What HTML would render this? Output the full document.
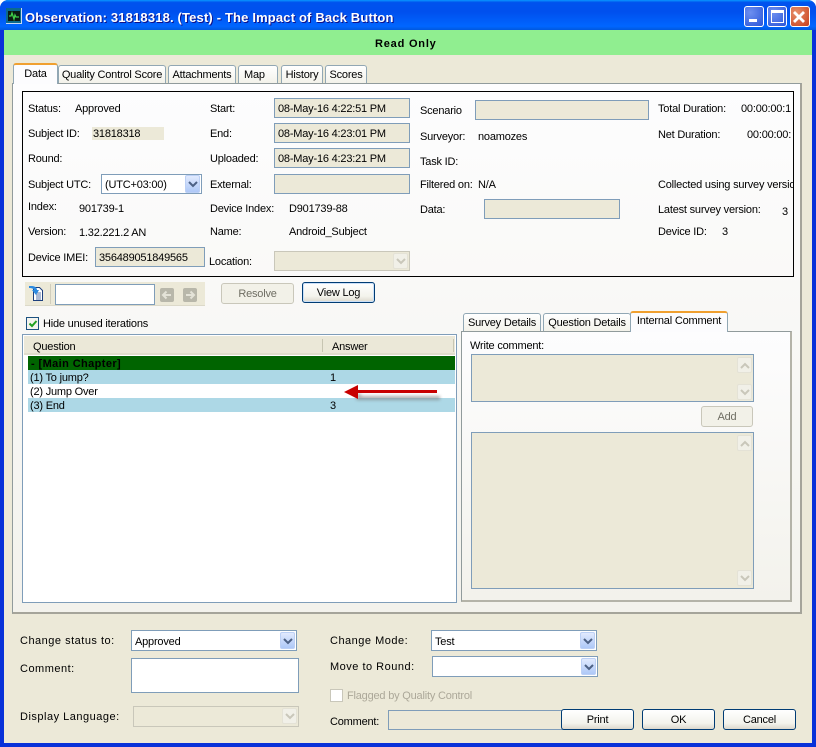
<!DOCTYPE html>
<html><head><meta charset="utf-8"><style>
html,body{margin:0;padding:0;background:#fff}
#w{position:relative;width:816px;height:747px;overflow:hidden;font:11px/14px "Liberation Sans",sans-serif;letter-spacing:-.2px;color:#000;background:#0831d9;border-radius:8px 8px 0 0}
#w div,#w span.t{position:absolute;box-sizing:border-box;white-space:nowrap}
.t{position:absolute;white-space:nowrap;margin-top:1px}
.f{background:#ece9d8;border:1px solid #7f9db9;padding:3px 3px;line-height:14px}
.w{background:#fff;border:1px solid #7f9db9;padding:4px 3px;line-height:14px}
.dis{background:#ece9d8;border:1px solid #c9c7ba}
.btn{border:1px solid #003c74;border-radius:3px;background:linear-gradient(#fff,#f3f3ec 70%,#dcd8cc);text-align:center;line-height:21px}
.btnd{border:1px solid #c9c7ba;border-radius:3px;background:#f2f1e8;color:#6f6e63;text-align:center;line-height:21px}
.cb{width:15px;border-radius:2px;background:linear-gradient(#e1eafe,#aec8f7);border:1px solid #bcd0f5}
.cbd{width:15px;height:16px;border-radius:2px;background:#f1f0e8;border:1px solid #e4e2d6}
.tab{background:linear-gradient(#fff,#f3f2ea);border:1px solid #91a7b4;border-bottom:0;border-radius:3px 3px 0 0;text-align:center;line-height:19px;height:18px}
.atab{background:#fcfcfe;border:1px solid #91a7b4;border-bottom:0;border-top:2px solid #f0a030;border-radius:3px 3px 0 0;text-align:center;line-height:17px}
.l{letter-spacing:.5px}
svg{position:absolute;display:block}
</style></head><body><div id="w">

<div style="left:0;top:0;width:816px;height:30px;border-radius:8px 8px 0 0;background:linear-gradient(#0997ff 0,#0053ee 8%,#0050ee 40%,#0066ff 88%,#0058dd 100%)"></div>
<svg style="left:6px;top:8px" width="16" height="16"><rect width="16" height="16" fill="#0c6a8c"/><rect x="15" width="1" height="16" fill="#c8d8f0"/><rect y="15" width="16" height="1" fill="#c8d8f0"/><rect x="2" y="3" width="12" height="10" fill="#0b1a12"/><path d="M3 8h2l1-3 2 6 1-4 1 2h3" stroke="#3fd04a" stroke-width="1.300" fill="none"/></svg>
<span class="t" style="left:25px;top:8px;font:bold 13px/17px 'Liberation Sans',sans-serif;color:#fff;letter-spacing:.16px;text-shadow:1px 1px 0 #0f1089">Observation: 31818318. (Test) - The Impact of Back Button</span>

<div style="left:744px;top:6px;width:20px;height:21px;border:1px solid #fff;border-radius:3px;background:radial-gradient(circle at 30% 30%,#6d8ff0,#2a55d8)"><div style="left:4px;top:12px;width:8px;height:3px;background:#fff"></div></div>
<div style="left:767px;top:6px;width:20px;height:21px;border:1px solid #fff;border-radius:3px;background:radial-gradient(circle at 30% 30%,#6d8ff0,#2a55d8)"><div style="left:3px;top:3px;width:13px;height:13px;border:1px solid #fff;border-top:3px solid #fff"></div></div>
<div style="left:790px;top:6px;width:20px;height:21px;border:1px solid #fff;border-radius:3px;background:radial-gradient(circle at 30% 30%,#e8906c,#c8401c)"><svg style="left:2px;top:3px" width="13" height="14"><path d="M1 2l10 10M11 2L1 12" stroke="#fff" stroke-width="2.800"/></svg></div>

<div style="left:4px;top:30px;width:808px;height:713px;background:#ece9d8"></div>
<div style="left:4px;top:30px;width:808px;height:25px;background:#90ee90"></div>
<span class="t" style="left:375px;top:36px;font-weight:bold;letter-spacing:.8px">Read Only</span>

<div style="left:12px;top:83px;width:790px;height:531px;border:1px solid #919b9c;border-right:2px solid #a5a49a;border-bottom:2px solid #a5a49a;background:linear-gradient(#fdfdfe,#f3f2ec)"></div>
<div class="atab" style="left:13px;top:63px;width:45px;height:21px;line-height:18px">Data</div>
<div class="tab" style="left:58px;top:65px;width:108px">Quality Control Score</div>
<div class="tab" style="left:168px;top:65px;width:68px">Attachments</div>
<div class="tab" style="left:238px;top:65px;width:40px;text-align:left;padding-left:5px">Map</div>
<div class="tab" style="left:281px;top:65px;width:42px">History</div>
<div class="tab" style="left:325px;top:65px;width:42px">Scores</div>

<div style="left:22px;top:91px;width:772px;height:186px;border:1px solid #000"></div>

<span class="t" style="left:28px;top:101px">Status:</span><span class="t" style="left:75px;top:101px">Approved</span>
<span class="t" style="left:28px;top:126px">Subject ID:</span>
<div style="left:92px;top:127px;width:72px;height:13px;background:#ece9d8"></div><span class="t" style="left:93px;top:126px">31818318</span>
<span class="t" style="left:28px;top:151px">Round:</span>
<span class="t" style="left:28px;top:177px">Subject UTC:</span>
<div class="w" style="left:101px;top:174px;width:101px;height:20px;padding:3px 3px">(UTC+03:00)</div>
<div class="cb" style="left:185px;top:175px;height:18px"></div><svg style="left:188px;top:181px" width="10" height="7"><path d="M1 1l4 4 4-4" stroke="#4d6185" stroke-width="2" fill="none"/></svg>
<span class="t" style="left:28px;top:199px">Index:</span><span class="t" style="left:79px;top:201px">901739-1</span>
<span class="t" style="left:28px;top:224px">Version:</span><span class="t" style="left:79px;top:225px">1.32.221.2 AN</span>
<span class="t" style="left:28px;top:250px">Device IMEI:</span>
<div class="f" style="left:95px;top:247px;width:110px;height:20px">356489051849565</div>

<span class="t" style="left:210px;top:101px">Start:</span><div class="f" style="left:274px;top:98px;width:136px;height:20px">08-May-16 4:22:51 PM</div>
<span class="t" style="left:210px;top:126px">End:</span><div class="f" style="left:274px;top:123px;width:136px;height:20px">08-May-16 4:23:01 PM</div>
<span class="t" style="left:210px;top:151px">Uploaded:</span><div class="f" style="left:274px;top:148px;width:136px;height:20px">08-May-16 4:23:21 PM</div>
<span class="t" style="left:210px;top:177px">External:</span><div class="f" style="left:274px;top:174px;width:136px;height:20px"></div>
<span class="t" style="left:210px;top:201px">Device Index:</span><span class="t" style="left:289px;top:201px">D901739-88</span>
<span class="t" style="left:210px;top:224px">Name:</span><span class="t" style="left:289px;top:224px">Android_Subject</span>
<span class="t" style="left:209px;top:254px">Location:</span>
<div class="dis" style="left:274px;top:251px;width:136px;height:20px"></div>
<div class="cbd" style="left:393px;top:253px"></div><svg style="left:396px;top:258px" width="10" height="7"><path d="M1 1l4 4 4-4" stroke="#c9c7ba" stroke-width="2" fill="none"/></svg>

<span class="t" style="left:420px;top:103px">Scenario</span><div class="f" style="left:475px;top:100px;width:174px;height:20px"></div>
<span class="t" style="left:420px;top:129px">Surveyor:</span><span class="t" style="left:478px;top:129px">noamozes</span>
<span class="t" style="left:420px;top:154px">Task ID:</span>
<span class="t" style="left:420px;top:177px">Filtered on:</span><span class="t" style="left:478px;top:177px">N/A</span>
<span class="t" style="left:420px;top:202px">Data:</span><div class="f" style="left:484px;top:199px;width:136px;height:20px"></div>

<span class="t" style="left:658px;top:101px">Total Duration:</span><div style="left:741px;top:102px;width:52px;height:14px;overflow:hidden">00:00:00:1</div>
<span class="t" style="left:658px;top:127px">Net Duration:</span><div style="left:747px;top:128px;width:46px;height:14px;overflow:hidden">00:00:00:</div>
<div style="left:658px;top:178px;width:135px;height:14px;overflow:hidden">Collected using survey version</div>
<span class="t" style="left:658px;top:202px">Latest survey version:</span><span class="t" style="left:782px;top:204px">3</span>
<span class="t" style="left:658px;top:224px">Device ID:</span><span class="t" style="left:722px;top:224px">3</span>

<div style="left:25px;top:282px;width:180px;height:24px;background:#ece9d8;border-bottom:1px solid #dcd9c9"></div>
<div style="left:50px;top:284px;width:1px;height:20px;background:#d0cdbc"></div>
<svg style="left:29px;top:285px" width="16" height="17"><path d="M4.500 2.500h6l3 3v10h-9z" fill="#fff" stroke="#1d3f7d"/><path d="M7 8h5M7 10h5M7 12h5M7 14h5" stroke="#5a76a8"/><path d="M0 1h3c3 0 5 2 5 4h2L7 10 3 5h2C5 4 3 3 0 3z" fill="#2c8ae0"/></svg>
<div class="w" style="left:55px;top:284px;width:100px;height:21px"></div>
<div style="left:160px;top:288px;width:14px;height:14px;background:#b8b7aa;border-radius:2px"></div><svg style="left:160px;top:288px" width="14" height="14"><path d="M11 7H3M6.500 3.500L3 7l3.500 3.500" stroke="#e4e3d8" stroke-width="2" fill="none"/></svg>
<div style="left:183px;top:288px;width:14px;height:14px;background:#b8b7aa;border-radius:2px"></div><svg style="left:183px;top:288px" width="14" height="14"><path d="M3 7h8M7.500 3.500L11 7l-3.500 3.500" stroke="#e4e3d8" stroke-width="2" fill="none"/></svg>
<div class="btnd" style="left:221px;top:283px;width:73px;height:21px">Resolve</div>
<div class="btn" style="left:302px;top:282px;width:73px;height:21px;box-shadow:inset 0 0 0 1px #cbe0f8">View Log</div>

<div style="left:26px;top:317px;width:13px;height:13px;border:1px solid #1c5180;background:#f4f4ee"></div>
<svg style="left:28px;top:319px" width="10" height="10"><path d="M1.500 4.500l2.500 2.500 4.500-5" stroke="#21a121" stroke-width="2" fill="none"/></svg>
<span class="t" style="left:43px;top:316px">Hide unused iterations</span>

<div style="left:22px;top:334px;width:435px;height:269px;background:#fff;border:1px solid #7f9db9"></div>
<div style="left:24px;top:336px;width:431px;height:19px;background:#ebe8d8;border-bottom:2px solid #e0ddcc"></div>
<div style="left:322px;top:339px;width:1px;height:13px;background:#c7c5b2"></div>
<div style="left:453px;top:339px;width:1px;height:13px;background:#c7c5b2"></div>
<span class="t" style="left:33px;top:339px">Question</span><span class="t" style="left:332px;top:339px">Answer</span>
<div style="left:28px;top:356px;width:427px;height:14px;background:#006400"></div>
<span class="t" style="left:31px;top:356px;font-weight:bold;letter-spacing:.4px;color:#000">- [Main Chapter]</span>
<div style="left:28px;top:370px;width:427px;height:14px;background:#add8e6"></div>
<div style="left:28px;top:398px;width:427px;height:14px;background:#add8e6"></div>
<span class="t" style="left:30px;top:370px">(1) To jump?</span><span class="t" style="left:330px;top:370px">1</span>
<span class="t" style="left:30px;top:384px">(2) Jump Over</span>
<span class="t" style="left:30px;top:398px">(3) End</span><span class="t" style="left:330px;top:398px">3</span>
<svg style="left:340px;top:382px" width="105" height="24"><defs><filter id="s" x="-20%" y="-100%" width="140%" height="300%"><feGaussianBlur stdDeviation="1.500"/></filter></defs><path d="M18 10l-2 8h84v-4H22z" fill="#777" opacity=".6" filter="url(#s)"/><path d="M4 10L18 3v5h79v3H18V17z" fill="#c80000"/></svg>

<div style="left:461px;top:331px;width:331px;height:271px;border:1px solid #919b9c;border-right:2px solid #b4b3a8;border-bottom:2px solid #b4b3a8;background:linear-gradient(#fdfdfe,#f3f2ec)"></div>
<div class="tab" style="left:463px;top:313px;width:78px">Survey Details</div>
<div class="tab" style="left:543px;top:313px;width:88px">Question Details</div>
<div class="atab" style="left:630px;top:311px;width:98px;height:21px">Internal Comment</div>
<span class="t" style="left:470px;top:338px">Write comment:</span>
<div class="f" style="left:471px;top:354px;width:283px;height:48px"></div>
<div class="cbd" style="left:737px;top:357px"></div><svg style="left:740px;top:362px" width="10" height="7"><path d="M1 6l4-4 4 4" stroke="#c9c7ba" stroke-width="2" fill="none"/></svg>
<div class="cbd" style="left:737px;top:384px"></div><svg style="left:740px;top:389px" width="10" height="7"><path d="M1 1l4 4 4-4" stroke="#c9c7ba" stroke-width="2" fill="none"/></svg>
<div class="btnd" style="left:701px;top:406px;width:52px;height:21px">Add</div>
<div class="f" style="left:471px;top:432px;width:283px;height:157px"></div>
<div class="cbd" style="left:737px;top:435px"></div><svg style="left:740px;top:440px" width="10" height="7"><path d="M1 6l4-4 4 4" stroke="#c9c7ba" stroke-width="2" fill="none"/></svg>
<div class="cbd" style="left:737px;top:570px"></div><svg style="left:740px;top:575px" width="10" height="7"><path d="M1 1l4 4 4-4" stroke="#c9c7ba" stroke-width="2" fill="none"/></svg>

<span class="t l" style="left:20px;top:633px">Change status to:</span>
<div class="w" style="left:131px;top:630px;width:166px;height:21px">Approved</div>
<div class="cb" style="left:280px;top:632px;height:17px"></div><svg style="left:283px;top:638px" width="10" height="7"><path d="M1 1l4 4 4-4" stroke="#4d6185" stroke-width="2" fill="none"/></svg>
<span class="t l" style="left:20px;top:661px">Comment:</span>
<div class="w" style="left:131px;top:658px;width:168px;height:35px"></div>
<span class="t l" style="left:20px;top:709px">Display Language:</span>
<div class="dis" style="left:133px;top:706px;width:166px;height:21px"></div>
<div class="cbd" style="left:282px;top:708px"></div><svg style="left:285px;top:713px" width="10" height="7"><path d="M1 1l4 4 4-4" stroke="#c9c7ba" stroke-width="2" fill="none"/></svg>

<span class="t l" style="left:330px;top:633px">Change Mode:</span>
<div class="w" style="left:431px;top:630px;width:166px;height:21px">Test</div>
<div class="cb" style="left:580px;top:632px;height:17px"></div><svg style="left:583px;top:638px" width="10" height="7"><path d="M1 1l4 4 4-4" stroke="#4d6185" stroke-width="2" fill="none"/></svg>
<span class="t l" style="left:330px;top:659px">Move to Round:</span>
<div class="w" style="left:432px;top:656px;width:166px;height:21px"></div>
<div class="cb" style="left:581px;top:658px;height:17px"></div><svg style="left:584px;top:664px" width="10" height="7"><path d="M1 1l4 4 4-4" stroke="#4d6185" stroke-width="2" fill="none"/></svg>
<div style="left:330px;top:689px;width:13px;height:13px;border:1px solid #c9c7ba;background:#fff"></div>
<span class="t" style="left:347px;top:688px;color:#aca899">Flagged by Quality Control</span>
<span class="t" style="left:330px;top:714px">Comment:</span>
<div class="f" style="left:388px;top:710px;width:180px;height:20px"></div>
<div class="btn" style="left:561px;top:709px;width:73px;height:21px">Print</div>
<div class="btn" style="left:642px;top:709px;width:73px;height:21px">OK</div>
<div class="btn" style="left:723px;top:709px;width:73px;height:21px">Cancel</div>
</div></body></html>
